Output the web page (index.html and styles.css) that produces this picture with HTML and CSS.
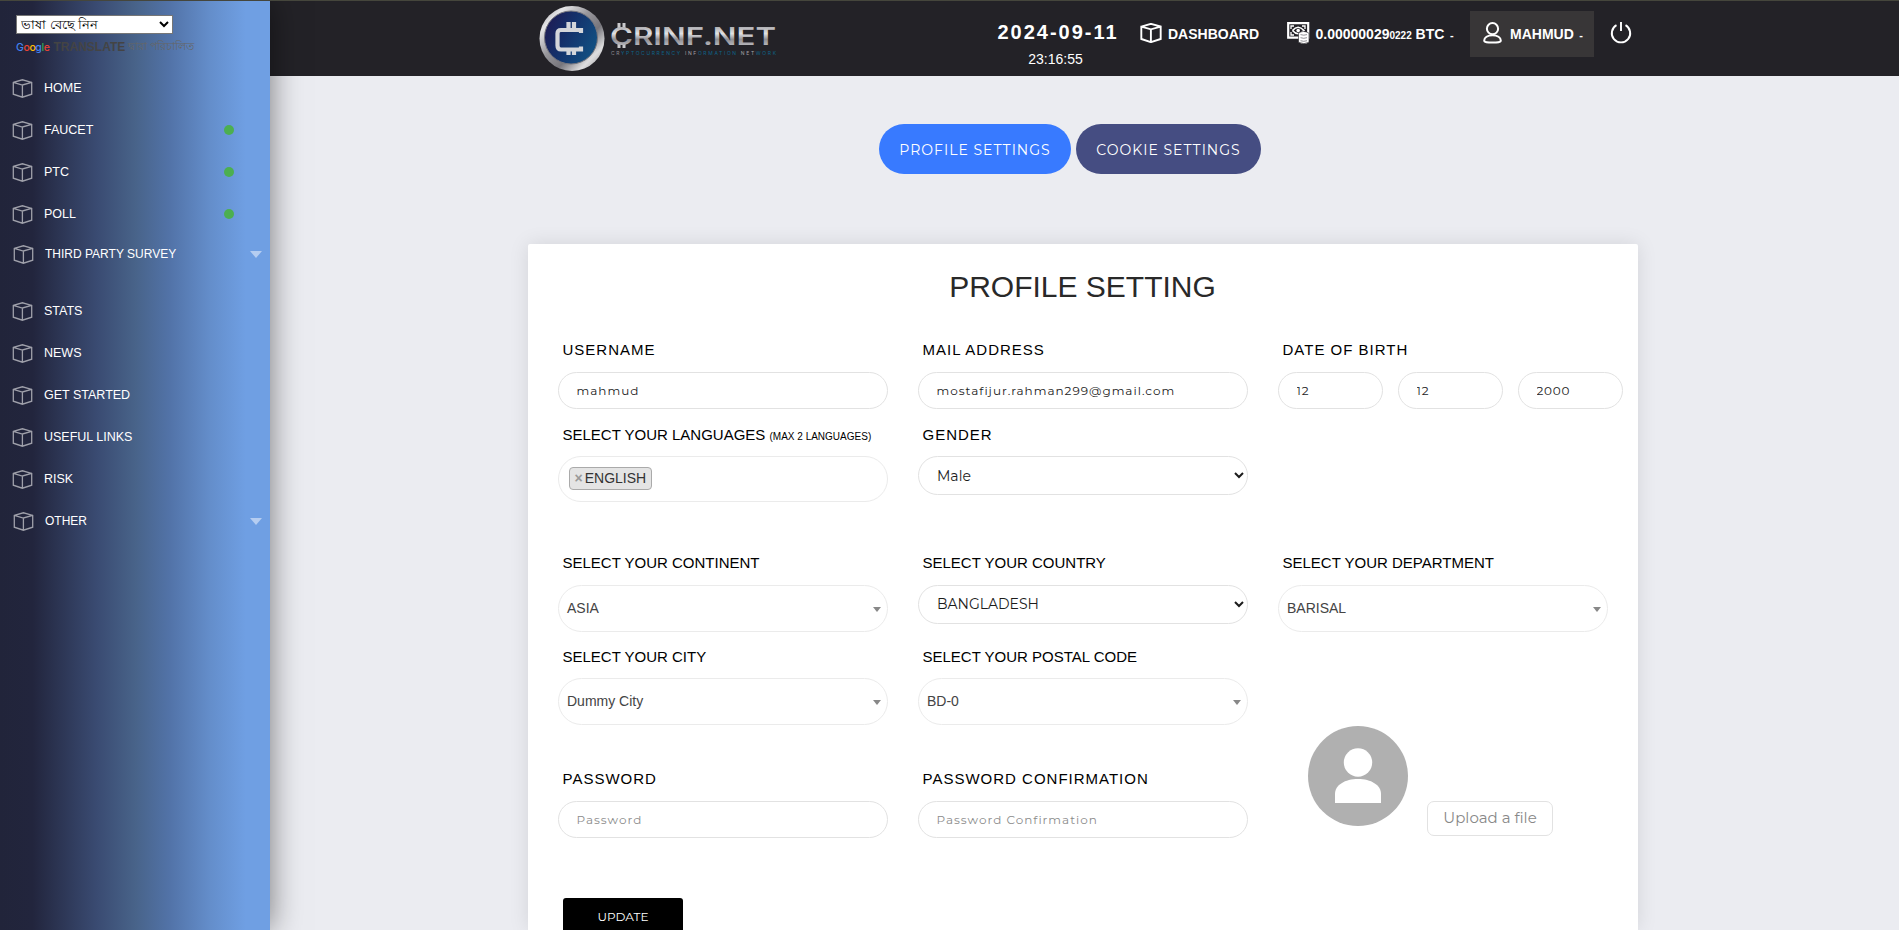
FILE: index.html
```html
<!DOCTYPE html>
<html lang="bn">
<head>
<meta charset="utf-8">
<title>Profile Setting</title>
<link rel="stylesheet" href="styles.css">
</head>
<body>
<svg class="defs" width="0" height="0" aria-hidden="true">
  <symbol id="box" viewBox="0 0 20 19">
    <path d="M.8 3.4 9.9.8l9.3 2.6v11.8l-9.3 3L.8 15.200zM.8 3.400 9.900 6l9.300-2.600M9.900 6v12.200"/>
  </symbol>
</svg>

<aside class="sidebar">
  <div class="translate">
    <select class="lang"><option>ভাষা বেছে নিন</option></select>
    <div class="powered">
      <span class="google"><i class="g-blue">G</i><i class="g-red">o</i><i class="g-yellow">o</i><i class="g-blue">g</i><i class="g-green">l</i><i class="g-red">e</i></span>
      <b>TRANSLATE</b>
      <span class="by">দ্বারা পরিচালিত</span>
    </div>
  </div>
  <nav class="menu">
    <a class="item"><svg class="cube"><use href="#box"/></svg>HOME</a>
    <a class="item"><svg class="cube"><use href="#box"/></svg>FAUCET<span class="dot"></span></a>
    <a class="item"><svg class="cube"><use href="#box"/></svg>PTC<span class="dot"></span></a>
    <a class="item"><svg class="cube"><use href="#box"/></svg>POLL<span class="dot"></span></a>
    <a class="item parent survey"><svg class="cube"><use href="#box"/></svg>THIRD PARTY SURVEY<span class="caret"></span></a>
    <a class="item"><svg class="cube"><use href="#box"/></svg>STATS</a>
    <a class="item"><svg class="cube"><use href="#box"/></svg>NEWS</a>
    <a class="item"><svg class="cube"><use href="#box"/></svg>GET STARTED</a>
    <a class="item"><svg class="cube"><use href="#box"/></svg>USEFUL LINKS</a>
    <a class="item"><svg class="cube"><use href="#box"/></svg>RISK</a>
    <a class="item parent"><svg class="cube"><use href="#box"/></svg>OTHER<span class="caret"></span></a>
  </nav>
</aside>

<div class="page">
  <header class="header">
    <svg class="logo" width="240" height="68" viewBox="0 0 240 68">
      <defs>
        <linearGradient id="ring" x1="0" y1="0" x2="1" y2="1">
          <stop offset="0" stop-color="#8e8d93"/><stop offset=".2" stop-color="#e6e6e8"/><stop offset=".42" stop-color="#98979c"/>
          <stop offset=".62" stop-color="#77767c"/><stop offset=".8" stop-color="#dededf"/><stop offset="1" stop-color="#858489"/>
        </linearGradient>
        <linearGradient id="disc" x1="0" y1="0" x2="1" y2=".5">
          <stop offset="0" stop-color="#21174f"/><stop offset=".5" stop-color="#14306a"/><stop offset="1" stop-color="#114d80"/>
        </linearGradient>
        <linearGradient id="silver" x1="0" y1="0" x2="0" y2="1">
          <stop offset="0" stop-color="#8b8a90"/><stop offset=".4" stop-color="#e2e2e4"/><stop offset=".6" stop-color="#8f8e94"/><stop offset="1" stop-color="#dcdcde"/>
        </linearGradient>
      </defs>
      <circle cx="33" cy="33.500" r="32.500" fill="url(#ring)"/>
      <circle cx="32" cy="32.500" r="26.500" fill="url(#disc)" stroke="#77777f" stroke-width="1"/>
      <path d="M42 28v-3H22q-3.500 0-3.500 3.500v12Q18.500 44.500 22 44.500H42v-3M29.500 25v-8M35 25v-8M29.500 44v6M35 44v6" fill="none" stroke="#d4d6da" stroke-width="4.200"/>
      <path d="M80 18v5M85 18v5M80 39v4M85 39v4" stroke="#c9c9cc" stroke-width="3"/>
      <text x="71" y="40" class="wordmark" textLength="166" lengthAdjust="spacingAndGlyphs" fill="url(#silver)">CRINF.NET</text>
      <text x="72" y="49.500" class="tagline" textLength="165"><tspan fill="#8c8c91">CR</tspan><tspan>YPTOCURRENCY</tspan> <tspan fill="#a5a5a9">INF</tspan><tspan>ORMATION</tspan> <tspan fill="#a5a5a9">NET</tspan><tspan>WORK</tspan></text>
    </svg>
    <div class="clock"><strong>2024-09-11</strong><span>23:16:55</span></div>
    <a class="nav dash"><svg class="nav-box"><use href="#box"/></svg>DASHBOARD</a>
    <a class="nav money">
      <svg width="23" height="22" viewBox="0 0 23 22" fill="none" stroke="#fff">
        <path d="M1.200 1.200h20v14.500h-20z" stroke-width="2.200"/>
        <path d="M4 7V4h3M15 4h3v3M4 10v3h3" stroke-width="1.300"/>
        <path d="M5.500 8.500q5.500-6.500 11.500 0-6 6.500-11.500 0" stroke-width="1.600"/>
        <circle cx="11.200" cy="8.500" r="1.800" fill="#fff" stroke="none"/>
        <path d="M11.500 11.200q5-3.500 10.500 0v9q-5 3-10.500 0z" fill="#fff" stroke="#232227" stroke-width=".6"/>
        <path d="M13.500 12.600q3.300 1.200 6.500 0M13.500 15.700q3.300 1.200 6.500 0M13.500 18.700q3.300 1.200 6.500 0" stroke="#77767c" stroke-width=".8"/>
      </svg>
      <span>0.00000029<small>0222</small> BTC<i class="dash-mark">-</i></span>
    </a>
    <a class="nav user">
      <svg width="19" height="22" viewBox="0 0 19 22" fill="none" stroke="#fff" stroke-width="2">
        <circle cx="9.500" cy="6.700" r="5.600"/>
        <path d="M1.200 18.500c0-3 3.300-5.300 8.300-5.300s8.300 2.300 8.300 5.300c0 1.900-3.300 2-8.300 2s-8.300-.1-8.300-2z"/>
      </svg>
      <span>MAHMUD<i class="dash-mark">-</i></span>
    </a>
    <a class="nav power">
      <svg width="22" height="22" viewBox="0 0 22 22" fill="none" stroke="#fff" stroke-width="1.900">
        <path d="M6.500 3.200a9.200 9.200 0 1 0 9 0M11 0v9"/>
      </svg>
    </a>
  </header>

  <main class="content">
    <div class="tabs">
      <a class="tab active"><span>PROFILE SETTINGS</span></a>
      <a class="tab"><span>COOKIE SETTINGS</span></a>
    </div>
    <form class="card">
      <h1>PROFILE SETTING</h1>
      <div class="fields">
        <div class="field r1"><label class="wide">USERNAME</label><input type="text" value="mahmud"></div>
        <div class="field r1"><label class="wide">MAIL ADDRESS</label><input type="text" value="mostafijur.rahman299@gmail.com"></div>
        <div class="field r1"><label class="wide">DATE OF BIRTH</label>
          <div class="birth"><input type="text" value="12"><input type="text" value="12"><input type="text" value="2000"></div>
        </div>

        <div class="field r2"><label>SELECT YOUR LANGUAGES <small>(MAX 2 LANGUAGES)</small></label>
          <div class="picker tags"><span class="tag"><b>×</b>ENGLISH</span></div>
        </div>
        <div class="field r2 last"><label class="wide">GENDER</label><select><option>Male</option></select></div>

        <div class="field r3"><label>SELECT YOUR CONTINENT</label><div class="picker">ASIA</div></div>
        <div class="field r3"><label>SELECT YOUR COUNTRY</label><select class="country"><option>BANGLADESH</option></select></div>
        <div class="field r3"><label>SELECT YOUR DEPARTMENT</label><div class="picker">BARISAL</div></div>

        <div class="field r4"><label>SELECT YOUR CITY</label><div class="picker">Dummy City</div></div>
        <div class="field r4"><label>SELECT YOUR POSTAL CODE</label><div class="picker">BD-0</div></div>
        <div class="upload">
          <svg class="avatar" width="100" height="100" viewBox="0 0 100 100">
            <circle cx="50" cy="50" r="50" fill="#b0b0b0"/>
            <circle cx="50" cy="36.500" r="14.200" fill="#fff"/>
            <path d="M27 77V68C27 59 37 53 50 53s23 6 23 15v9z" fill="#fff"/>
          </svg>
          <button type="button"><span>Upload a file</span></button>
        </div>

        <div class="field r5"><label class="wide">PASSWORD</label><input type="text" placeholder="Password"></div>
        <div class="field r5"><label class="wide">PASSWORD CONFIRMATION</label><input type="text" placeholder="Password Confirmation"></div>
      </div>
      <button type="button" class="update">UPDATE</button>
    </form>
  </main>
</div>
</body>
</html>
```

FILE: styles.css
```css
* { box-sizing: border-box; }
body {
  margin: 0;
  height: 930px;
  overflow: hidden;
  display: flex;
  border-top: 1px solid #45463c;
  background: #ebecf1;
  font-family: "Liberation Sans", Arial, sans-serif;
  color: #000;
}
i { font-style: normal; }
.defs { position: absolute; }

/* Sidebar */
.sidebar {
  width: 270px;
  height: 929px;
  flex: none;
  z-index: 1;
  background: linear-gradient(90deg, #21243a 0%, #22253d 12%, #3a4b72 36%, #486389 50%, #5273a8 63%, #648ecb 78%, #6f9fe3 91%, #6f9fe3 100%);
  box-shadow: 0 0 30px rgba(0, 0, 0, .5);
}
.translate { height: 66px; padding: 14px 0 0 16px; }
.lang {
  display: block;
  width: 157px;
  height: 19px;
  padding: 0;
  border: 1px solid #767676;
  border-radius: 0;
  background: #fff;
  color: #000;
  font: 13.333px "Liberation Sans", Arial, sans-serif;
}
.powered {
  display: flex;
  align-items: center;
  height: 22px;
  margin-top: 2px;
  color: #444;
  font-size: 12px;
  white-space: nowrap;
}
.google { width: 37.500px; font: 500 10.500px Inter, sans-serif; letter-spacing: -.4px; }
.g-blue { color: #4285f4; }
.g-red { color: #ea4335; }
.g-yellow { color: #fbbc05; }
.g-green { color: #34a853; }
.powered b { width: 74.500px; }
.by { color: #666; font-size: 11px; }
.item {
  display: flex;
  align-items: center;
  height: 42px;
  padding-left: 12px;
  color: #fff;
  font-size: 12.500px;
}
.cube { width: 21px; height: 19px; margin: 0 11px 0 0; fill: none; stroke: #9fa0aa; stroke-width: 1.300; }
.dot { width: 10px; height: 10px; margin: 0 36px 0 auto; border-radius: 50%; background: #4caf50; }
.parent { padding-left: 13px; font-size: 12px; }
.survey { height: 38px; margin-bottom: 17px; }
.caret { margin: 0 8px 0 auto; border: 6px solid transparent; border-top: 7px solid #b5cdf1; border-bottom: 0; }

/* Header */
.page { flex: 1; min-width: 0; }
.header { display: flex; height: 75px; padding-left: 269px; background: #232227; color: #fff; }
.logo { flex: none; margin-top: 4px; }
.wordmark { font: 600 24px Inter, sans-serif; }
.tagline { font: 5px Inter, sans-serif; fill: #0e6389; }
.clock { width: 124px; flex: none; margin: 14px 0 0 217px; text-align: center; white-space: nowrap; }
.clock strong { display: block; font-size: 20px; line-height: 34px; letter-spacing: 2px; }
.clock span { display: block; padding-right: 5px; font-size: 14px; line-height: 20px; }
.nav { display: flex; flex: none; align-items: center; height: 46px; margin-top: 10px; font-size: 14px; font-weight: 700; white-space: nowrap; }
.nav svg { flex: none; margin-bottom: 2px; }
.nav small { font-size: 10px; }
.dash { width: 147px; margin-left: 20px; }
.nav-box { width: 22px; height: 20px; margin-right: 6px; fill: none; stroke: #fff; stroke-width: 1.800; }
.money { width: 183px; gap: 5.500px; }
.dash-mark { margin-left: 5.500px; font-size: 11px; }
.user { width: 124px; padding-left: 13px; gap: 8px; background: #383637; }
.power { margin-left: 16px; }

/* Tabs */
.content { width: 1110px; margin-left: 258px; }
.tabs { display: flex; justify-content: center; gap: 5px; padding: 48px 26px 70px 0; }
.tab {
  display: flex;
  align-items: center;
  justify-content: center;
  width: 185px;
  height: 50px;
  padding-top: 1px;
  border-radius: 25px;
  background: #454d82;
  color: #fff;
  font: 400 14px Montserrat, Inter, sans-serif;
  letter-spacing: 1px;
}
.tab.active { width: 192px; background: #387aff; }

/* Card */
.card { height: 686px; padding: 0 30px; border-radius: 2px 2px 0 0; background: #fff; box-shadow: 0 0 20px rgba(0, 0, 0, .1); overflow: hidden; }
.card h1 { margin: 0 1px 10px 0; padding-top: 25px; color: #292929; font-size: 30px; font-weight: 400; line-height: 36px; text-align: center; }
.fields {
  display: grid;
  grid-template-columns: repeat(3, 330px);
  grid-template-rows: 85px 128px 94px 122px 69px;
  column-gap: 30px;
  padding-top: 25px;
}
.field { display: flex; flex-direction: column; gap: 11px; }
.r1, .r3, .r5 { gap: 12px; }
.last { grid-column: 2 / 4; width: 330px; }
label { height: 20px; padding-left: 4.500px; font-size: 15px; line-height: 20px; white-space: nowrap; }
label.wide { letter-spacing: 1px; }
label small { font-size: 10px; }
input {
  display: block;
  width: 330px;
  height: 37px;
  padding: 0 17.500px;
  border: 1px solid #e2e2e2;
  border-radius: 19px;
  outline: 0;
  background: #fff;
  color: #222;
  font: 400 12px Montserrat, Inter, sans-serif;
  letter-spacing: 1px;
}
input::placeholder { color: #8c8c8c; opacity: 1; }
.birth { display: flex; gap: 15px; width: 345px; }
.birth input { width: 105px; letter-spacing: .8px; }
select {
  width: 330px;
  height: 39px;
  padding: 0 0 0 14px;
  border: 1px solid #e2e2e2;
  border-radius: 20px;
  background: #fff;
  color: #1c1c1c;
  font: 400 14px Montserrat, Inter, sans-serif;
}
.country { padding-bottom: 1px; }
.picker {
  display: flex;
  align-items: center;
  justify-content: space-between;
  height: 47px;
  padding: 0 6px 1px 8px;
  border: 1px solid #ebebeb;
  border-radius: 24px;
  color: #444;
  font-size: 14px;
}
.picker::after { content: ""; margin-top: 2px; border: 4px solid transparent; border-top: 5px solid #888; border-bottom: 0; }
.tags { height: 46px; padding-left: 10px; }
.tags::after { display: none; }
.tag { display: flex; align-items: center; height: 23px; padding: 0 5px 1px 4.500px; border: 1px solid #aaa; border-radius: 4px; background: #e4e4e4; color: #333; }
.tag b { margin-right: 2px; color: #999; }
.upload { display: flex; grid-row: 4 / 6; grid-column: 3; align-items: flex-end; gap: 19px; padding: 0 0 12px 30px; }
.r5:nth-last-child(2) { grid-column: 1; }
.upload button {
  width: 126px;
  height: 35px;
  margin-bottom: -10px;
  padding: 0 0 2px;
  border: 1px solid #e2e2e2;
  border-radius: 7px;
  background: #fff;
  color: #888;
  font: 400 15px Montserrat, Inter, sans-serif;
}
.update {
  display: block;
  width: 120px;
  height: 38px;
  margin: 60px 0 0 5px;
  padding: 0 0 2px;
  border: 0;
  border-radius: 3px;
  background: #000;
  color: #fff;
  font: 400 12px Montserrat, Inter, sans-serif;
}
```
